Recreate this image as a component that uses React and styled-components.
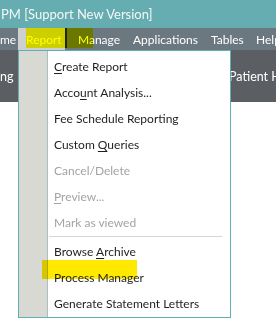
import React from "react";
import styled, { createGlobalStyle } from "styled-components";

const GlobalStyle = createGlobalStyle`
  html, body {
    margin: 0;
    padding: 0;
    background: #ffffff;
  }
  * {
    box-sizing: border-box;
  }
`;

// STYLED COMPONENTS
const Screen = styled.div`
  position: relative;
  width: 276px;
  height: 323px;
  overflow: hidden;
  background: #ffffff;
  font-family: Lato, "Noto Sans", sans-serif;
`;
const TitleBar = styled.div`
  height: 28px;
  display: flex;
  align-items: center;
  padding-left: 1px;
  background: #66adb1;
  color: #f4f7f7;
  font-size: 13px;
  white-space: nowrap;
`;
const MenuBar = styled.div`
  height: 22px;
  display: flex;
  align-items: stretch;
  background: #6b7880;
  color: #ffffff;
  font-size: 12px;
  white-space: nowrap;
  overflow: hidden;
`;
const MenuItem = styled.div`
  flex: 0 0 ${(p) => (p.$w ? `${p.$w}px` : "auto")};
  display: flex;
  align-items: center;
  padding-left: ${(p) => p.$pl || 0}px;
  background: ${(p) => (p.$open ? "#cdcfd0" : "transparent")};
`;
const Marker = styled.div`
  position: absolute;
  left: ${(p) => p.$x}px;
  top: ${(p) => p.$y}px;
  width: ${(p) => p.$w}px;
  height: ${(p) => p.$h}px;
  background: ${(p) => p.$color};
  mix-blend-mode: multiply;
  border-left: ${(p) => (p.$edge ? "2px solid #4e4e00" : "none")};
  pointer-events: none;
  z-index: 5;
`;
const ToolBar = styled.div`
  height: 52px;
  display: flex;
  align-items: center;
  background: #5b5e62;
  color: #ffffff;
  font-size: 12.5px;
  white-space: nowrap;
  overflow: hidden;
`;
const ToolLabel = styled.div`
  flex: 0 0 ${(p) => (p.$w ? `${p.$w}px` : "auto")};
  margin-top: 1px;
`;
const Dropdown = styled.div`
  position: absolute;
  left: 18px;
  top: 50px;
  width: 213px;
  height: 268px;
  display: flex;
  background: #ffffff;
  border: 1px solid #62afb3;
  z-index: 3;
`;
const Gutter = styled.div`
  width: 29px;
  background: #d9d9d4;
  border-right: 1px solid #a9bebf;
`;
const ItemList = styled.div`
  flex: 1;
  padding-top: 2px;
  display: flex;
  flex-direction: column;
`;
const Item = styled.div`
  height: 26px;
  display: flex;
  align-items: center;
  padding-left: 6px;
  font-size: 12px;
  color: ${(p) => (p.$disabled ? "#a3a3a3" : "#1f1f1f")};
  white-space: pre;
`;
const Separator = styled.div`
  height: 3px;
  display: flex;
  align-items: center;
  padding: 0 8px 0 1px;
  &::after {
    content: "";
    flex: 1;
    height: 1px;
    background: #d6d6d6;
  }
`;
const Mn = styled.span`
  text-decoration: underline;
  text-underline-offset: 2px;
`;

const items = [
  { label: ["", "C", "reate Report"] },
  { label: ["Acco", "u", "nt Analysis..."] },
  { label: ["Fee Schedule Reporting"] },
  { label: ["Custom ", "Q", "ueries"] },
  { label: ["Cancel/Delete"], disabled: true },
  { label: ["", "P", "review..."], disabled: true },
  { label: ["Mark as viewed"], disabled: true },
  { sep: true },
  { label: ["Browse ", "A", "rchive"] },
  { label: ["Process Manager"] },
  { label: ["Generate Statement Letters"] },
];

const App = () => {
  return (
    <Screen>
      <GlobalStyle />
      <TitleBar>PM [Support New Version]</TitleBar>
      <MenuBar>
        <MenuItem $w={18}>me</MenuItem>
        <MenuItem $open $w={47} $pl={8}>
          Report
        </MenuItem>
        <MenuItem $w={68} $pl={13}>
          Manage
        </MenuItem>
        <MenuItem $w={78}>Applications</MenuItem>
        <MenuItem $w={45}>Tables</MenuItem>
        <MenuItem>Help</MenuItem>
      </MenuBar>
      <ToolBar>
        <ToolLabel $w={229}>ng</ToolLabel>
        <ToolLabel>Patient History</ToolLabel>
      </ToolBar>

      <Dropdown>
        <Gutter />
        <ItemList>
          {items.map((it, i) =>
            it.sep ? (
              <Separator key={i} />
            ) : (
              <Item key={i} $disabled={it.disabled}>
                <span>
                  {it.label[0]}
                  {it.label[1] && <Mn>{it.label[1]}</Mn>}
                  {it.label[2]}
                </span>
              </Item>
            )
          )}
        </ItemList>
      </Dropdown>

      {/* highlighter marks */}
      <Marker $x={26} $y={28} $w={39} $h={20} $color="#ffff00" />
      <Marker $x={65} $y={28} $w={28} $h={20} $color="#ffff00" $edge />
      <Marker $x={42} $y={260} $w={95} $h={19} $color="#ffe900" />
    </Screen>
  );
};

export default App;
